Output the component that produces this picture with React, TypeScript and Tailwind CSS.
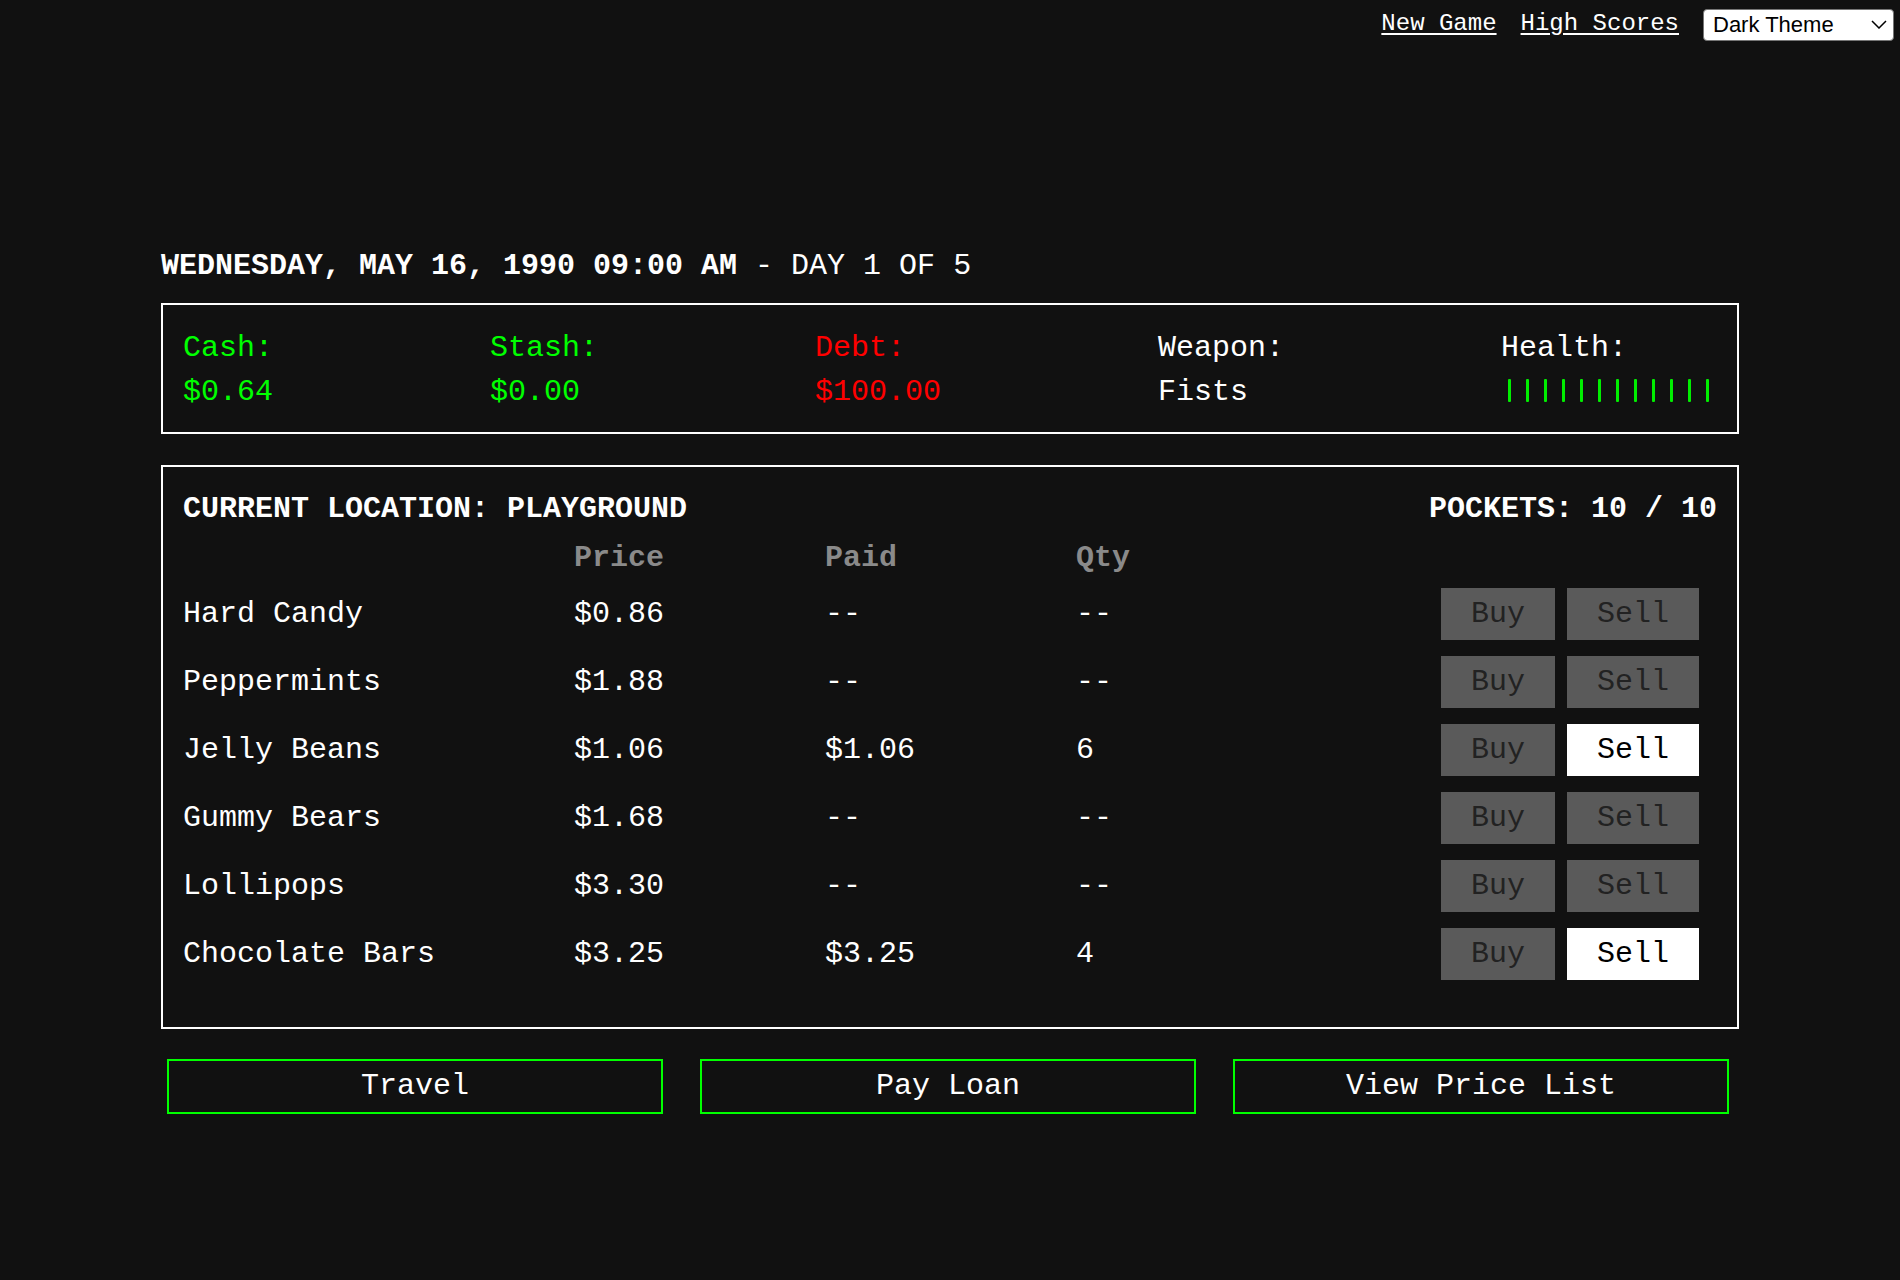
import React from "react";

const mono =
  "font-['Courier_New','Nimbus_Mono_PS','Nimbus_Mono_L','FreeMono','Liberation_Mono',monospace]";

type Row = { name: string; price: string; paid: string; qty: string; canSell: boolean };

const rows: Row[] = [
  { name: "Hard Candy", price: "$0.86", paid: "--", qty: "--", canSell: false },
  { name: "Peppermints", price: "$1.88", paid: "--", qty: "--", canSell: false },
  { name: "Jelly Beans", price: "$1.06", paid: "$1.06", qty: "6", canSell: true },
  { name: "Gummy Bears", price: "$1.68", paid: "--", qty: "--", canSell: false },
  { name: "Lollipops", price: "$3.30", paid: "--", qty: "--", canSell: false },
  { name: "Chocolate Bars", price: "$3.25", paid: "$3.25", qty: "4", canSell: true },
];

function Stat({ label, value, color }: { label: string; value: React.ReactNode; color: string }) {
  return (
    <div className={`flex flex-col ${color}`}>
      <div className="leading-[44px] pt-[1px]">{label}</div>
      <div className="leading-[45px]">{value}</div>
    </div>
  );
}

export default function App() {
  return (
    <div className={`min-h-screen bg-[#111111] text-white ${mono} text-[30px]`}>
      <header className="flex h-[46px] items-center justify-end gap-6 pr-[6px] pt-[1px] text-[24px]">
        <a href="#" className="underline underline-offset-[3px] text-white">New Game</a>
        <a href="#" className="underline underline-offset-[3px] text-white">High Scores</a>
        <div className="relative h-[32px]">
          <select
            defaultValue="dark"
            className="h-[32px] w-[191px] appearance-none rounded-[4px] border border-[#767676] bg-white pl-[9px] text-[22px] leading-[30px] text-black font-['Liberation_Sans',Arial,sans-serif]"
          >
            <option value="dark">Dark Theme</option>
            <option value="light">Light Theme</option>
          </select>
          <svg
            className="pointer-events-none absolute right-[7px] top-[12px]"
            width="16"
            height="9"
            viewBox="0 0 16 9"
            fill="none"
          >
            <path d="M1 1 L8 8 L15 1" stroke="#000" strokeWidth="1.5" />
          </svg>
        </div>
      </header>

      <main className="mx-auto mt-[198px] w-[1578px]">
        <h1 className="leading-[45px] text-[30px]">
          <span className="font-bold">WEDNESDAY, MAY 16, 1990 09:00 AM</span>
          <span> - DAY 1 OF 5</span>
        </h1>

        <section className="mt-[14px] flex justify-between border-2 border-white px-5 pt-5 pb-[17px]">
          <Stat label="Cash:" value="$0.64" color="text-[#00ff00]" />
          <Stat label="Stash:" value="$0.00" color="text-[#00ff00]" />
          <Stat label="Debt:" value="$100.00" color="text-[#ff0000]" />
          <Stat label="Weapon:" value="Fists" color="text-white" />
          <div className="flex flex-col">
            <div className="leading-[44px] pt-[1px]">Health:</div>
            <div className="flex h-[45px] items-center pb-[4px]">
              {Array.from({ length: 12 }).map((_, i) => (
                <div key={i} className="flex w-[18px] justify-center">
                  <div className="h-[23px] w-[3px] rounded-[1px] bg-[#00ee00]" />
                </div>
              ))}
            </div>
          </div>
        </section>

        <section className="mt-[31px] border-2 border-white px-5 pt-5 pb-[21px]">
          <div className="flex h-[45px] items-center justify-between font-bold">
            <span>CURRENT LOCATION: PLAYGROUND</span>
            <span>POCKETS: 10 / 10</span>
          </div>
          <div className="mb-[18px] grid grid-cols-[391px_251px_251px_1fr_auto]">
            <div className="mt-[4px] h-[44px]" />
            <div className="mt-[4px] flex h-[44px] items-center font-bold text-[#8a8a8a]">Price</div>
            <div className="mt-[4px] flex h-[44px] items-center font-bold text-[#8a8a8a]">Paid</div>
            <div className="mt-[4px] flex h-[44px] items-center font-bold text-[#8a8a8a]">Qty</div>
            <div className="mt-[4px] h-[44px]" />
            {rows.map((r) => (
              <React.Fragment key={r.name}>
                <div className="flex h-[68px] items-center">{r.name}</div>
                <div className="flex h-[68px] items-center">{r.price}</div>
                <div className="flex h-[68px] items-center">{r.paid}</div>
                <div className="flex h-[68px] items-center">{r.qty}</div>
                <div className="flex h-[68px] items-center gap-[12px] pr-[18px]">
                  <button className="h-[52px] bg-[#5a5a5a] px-[30px] text-[#222222]">Buy</button>
                  <button
                    className={
                      r.canSell
                        ? "h-[52px] bg-white px-[30px] text-black"
                        : "h-[52px] bg-[#5a5a5a] px-[30px] text-[#222222]"
                    }
                  >
                    Sell
                  </button>
                </div>
              </React.Fragment>
            ))}
          </div>
        </section>

        <div className="mt-[30px] flex gap-[37px] pl-[6px] pr-[10px]">
          {["Travel", "Pay Loan", "View Price List"].map((t) => (
            <button
              key={t}
              className="flex h-[55px] flex-1 items-center justify-center border-2 border-[#00ff00] bg-[#111111] text-white"
            >
              {t}
            </button>
          ))}
        </div>
      </main>
    </div>
  );
}
